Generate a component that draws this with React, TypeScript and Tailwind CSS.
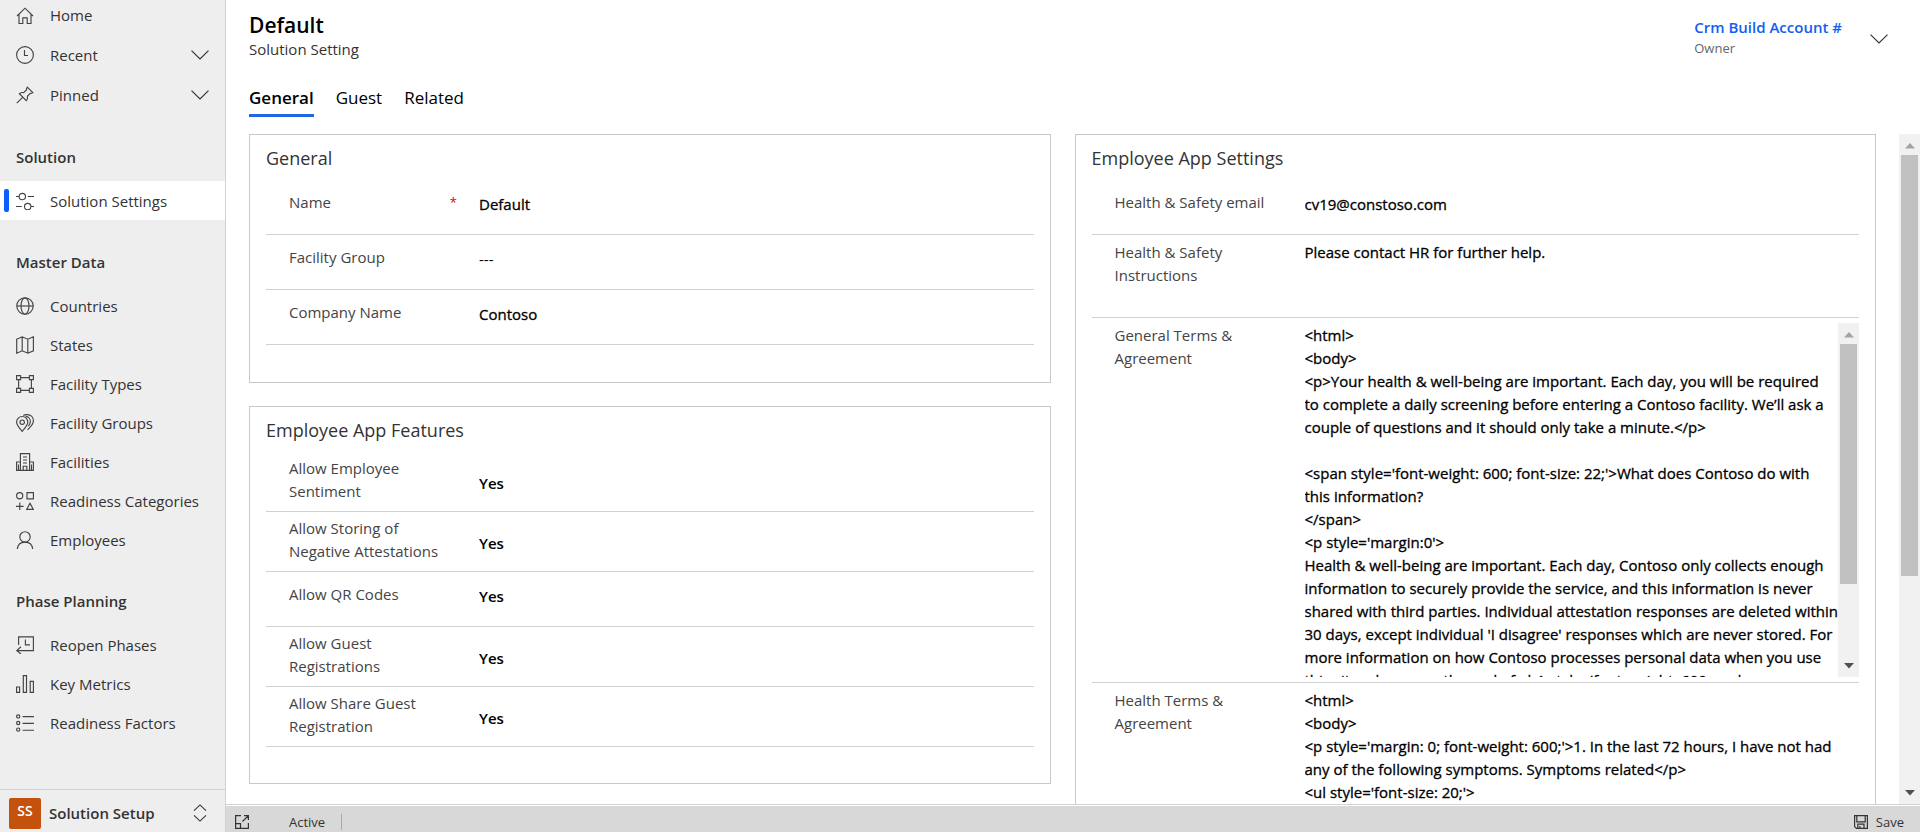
import React from "react";

const SANS = "font-['Open_Sans','Noto_Sans',sans-serif]";
const VALUE_FONT = "text-[15px] leading-[23px] text-black";
const MEDIUM = "[-webkit-text-stroke:0.02em_#000]";

function Icon({ children }: { children: React.ReactNode }) {
  return (
    <svg
      aria-hidden="true"
      className="h-[18px] w-[18px] shrink-0"
      viewBox="0 0 18 18"
      fill="none"
      stroke="#444"
      strokeWidth="1.15"
    >
      {children}
    </svg>
  );
}

const icons: Record<string, React.ReactNode> = {
  home: <path d="M1 9 9 1.2 17 9M3 7.2v9.3h3.8v-5.7h4.4v5.7H15V7.2" />,
  recent: (
    <>
      <circle cx="9" cy="9" r="8.4" />
      <path d="M8.5 4v5.5H12" />
    </>
  ),
  pinned: <path d="m.8 17.2 5.6-5.6M11.3 1.2l5.5 5.5-1.6.8-.9-.1-2.9 2.9c.5 2-.1 3.2-1.1 4.3L3.4 7.7c1.2-1 2.5-1.5 4.3-1.1l2.9-2.9-.1-.9z" />,
  settings: (
    <>
      <circle cx="6.3" cy="4.5" r="3.2" />
      <path d="M0 4.5h3.1M11.8 4.5H18M0 14.5h5.8M15 14.5h3" />
      <circle cx="11.7" cy="14.5" r="3.2" />
    </>
  ),
  countries: (
    <>
      <circle cx="9" cy="9" r="8.2" />
      <ellipse cx="9" cy="9" rx="4" ry="8.2" />
      <path d="M.8 9h16.4" />
    </>
  ),
  states: <path d="M.7 3.2 6.2.8l5.6 2.4L17.4.8v14l-5.6 2.4-5.6-2.4-5.5 2.4zM6.2.8v14M11.8 3.2v14" />,
  types: (
    <path d="M.6.6h4v4h-4zM13.4.6h4v4h-4zM.6 13.4h4v4h-4zM13.4 13.4h4v4h-4zM4.6 2.6h8.8M4.6 15.4h8.8M2.6 4.6v8.8M15.4 4.6v8.8" />
  ),
  groups: (
    <>
      <path d="M6.2 17.3C4 14.6.6 11.7.6 8.1a5.6 5.6 0 0 1 11.2 0c0 3.6-3.4 6.5-5.6 9.2z" />
      <circle cx="6.2" cy="8.2" r="2.2" />
      <path d="M7.3 1.5C8.5.7 10 .5 11.4.6c3.5.2 6 2.8 6 6.1 0 4-3.3 6.3-5.8 9.1M9.7 2.4c2.8.2 4.8 2.5 4.6 5.5-.1 1.7-.9 3-1.9 4.3" />
    </>
  ),
  facilities: (
    <path d="M4.4 17.4V.6h9.2v16.8M4.4 9H.6v8.4h16.8V9h-3.8M7 4h4M7 7h4M7 10h4M7.2 17.4v-4.2h3.6v4.2M2.5 11.5v6M15.5 11.5v6" />
  ),
  categories: (
    <>
      <circle cx="3.7" cy="3.7" r="3.1" />
      <path d="M11 .6h6.4v6.3H11zM3.8 10.6v7.4M0 14.3h7.6M14 11.2l3.3 6.2h-6.6z" />
    </>
  ),
  employees: (
    <>
      <circle cx="9" cy="5.9" r="5.2" />
      <path d="M1.3 18c.5-4.2 3.6-6.9 7.7-6.9s7.2 2.7 7.7 6.9" />
    </>
  ),
  reopen: <path d="M2.6 9V.8h14.8v13.8H1M5 10.8l-4.2 3.8L5 18M9.4 3.6v5.2H14" />,
  metrics: <path d="M.6 12h3v5.4h-3zM7.3.6h3.2v16.8H7.3zM14.2 6.4h3.2v11h-3.2z" />,
  factors: (
    <>
      <circle cx="2.2" cy="2.4" r="1.6" />
      <circle cx="2.2" cy="9" r="1.6" />
      <circle cx="2.2" cy="15.6" r="1.6" />
      <path d="M6.6 2.6H18M6.6 9.3H18M6.6 16.2H18" />
    </>
  ),
};

function Chevron() {
  return (
    <svg aria-hidden="true" className="h-[10px] w-[18px] shrink-0" viewBox="0 0 18 10" fill="none" stroke="#333" strokeWidth="1.15">
      <path d="m.5.6 8.5 8.4L17.5.6" />
    </svg>
  );
}

function NavItem({ icon, label, current = false }: { icon: string; label: string; current?: boolean }) {
  return (
    <li>
      <a
        href="#"
        aria-current={current ? "page" : undefined}
        className={
          current
            ? "flex h-[39px] items-center bg-white pl-1 text-[#333]"
            : "flex h-[39px] items-center pl-4 text-[#333]"
        }
      >
        {current && <span className="mr-[7px] h-[23px] w-[5px] rounded-xs bg-[#0b5fff]" />}
        <Icon>{icons[icon]}</Icon>
        <span className="ml-4 leading-5">{label}</span>
      </a>
    </li>
  );
}

function NavGroup({ title, children }: { title: string; children: React.ReactNode }) {
  return (
    <section>
      <h2 className="flex h-[66px] items-end pb-3 pl-4 font-semibold leading-6 text-[#333]">{title}</h2>
      <ul>{children}</ul>
    </section>
  );
}

function Sidebar() {
  return (
    <aside className="flex w-[226px] shrink-0 flex-col border-r border-[#d2d2d2] bg-[#eee] text-[15px]">
      <nav className="-mt-1 grow">
        <a href="#" className="flex h-[39px] items-center pl-4 text-[#333]">
          <Icon>{icons.home}</Icon>
          <span className="ml-4">Home</span>
        </a>
        {[
          ["recent", "Recent"],
          ["pinned", "Pinned"],
        ].map(([icon, label]) => (
          <button key={icon} type="button" className="flex h-10 w-full items-center pl-4 pr-4 text-[#333]">
            <Icon>{icons[icon]}</Icon>
            <span className="ml-4 grow text-left">{label}</span>
            <Chevron />
          </button>
        ))}
        <NavGroup title="Solution">
          <NavItem icon="settings" label="Solution Settings" current />
        </NavGroup>
        <NavGroup title="Master Data">
          <NavItem icon="countries" label="Countries" />
          <NavItem icon="states" label="States" />
          <NavItem icon="types" label="Facility Types" />
          <NavItem icon="groups" label="Facility Groups" />
          <NavItem icon="facilities" label="Facilities" />
          <NavItem icon="categories" label="Readiness Categories" />
          <NavItem icon="employees" label="Employees" />
        </NavGroup>
        <NavGroup title="Phase Planning">
          <NavItem icon="reopen" label="Reopen Phases" />
          <NavItem icon="metrics" label="Key Metrics" />
          <NavItem icon="factors" label="Readiness Factors" />
        </NavGroup>
      </nav>
      <button type="button" className="flex h-[43px] shrink-0 items-center border-t border-[#d2d2d2] pl-[9px] pr-[18px] pt-1">
        <span className="flex h-[31px] w-8 items-center justify-center rounded-xs bg-[#c4510c] pb-1 text-sm font-semibold text-white">
          SS
        </span>
        <span className="ml-2 grow text-left font-semibold text-[#333]">Solution Setup</span>
        <svg aria-hidden="true" className="h-[18px] w-[14px]" viewBox="0 0 14 18" fill="none" stroke="#333" strokeWidth="1.1">
          <path d="M1 6.6 7 .9l6 5.7M1 11.4l6 5.7 6-5.7" />
        </svg>
      </button>
    </aside>
  );
}

type FieldProps = {
  id: string;
  label: string;
  value: string;
  required?: boolean;
  muted?: boolean;
  strong?: boolean;
};

function Field({ id, label, value, required, muted, strong }: FieldProps) {
  return (
    <div className="flex h-[55px] border-b border-[#d2d2d2] pl-[23px] pt-[11px]">
      <label htmlFor={id} className="flex w-[190px] shrink-0 justify-between pr-[22px] leading-[23px] text-[#444]">
        {label}
        {required && <span className="text-[13px] text-[#e00000]">*</span>}
      </label>
      <input
        id={id}
        readOnly
        defaultValue={value}
        className={`mt-[2px] h-[23px] min-w-0 grow bg-transparent outline-none ${VALUE_FONT} ${
          strong ? "font-semibold" : muted ? "font-normal" : MEDIUM
        }`}
      />
    </div>
  );
}

function TwoLineField({ id, label, value }: FieldProps) {
  return (
    <div className="flex h-[60px] border-b border-[#d2d2d2] pl-[23px] pt-[5px]">
      <label htmlFor={id} className="w-[190px] shrink-0 pr-8 leading-[23px] text-[#444]">
        {label}
      </label>
      <input
        id={id}
        readOnly
        defaultValue={value}
        className={`mt-[15px] h-[23px] min-w-0 grow bg-transparent font-semibold outline-none ${VALUE_FONT}`}
      />
    </div>
  );
}

function ScrollTrack({ ratio }: { ratio: number }) {
  return (
    <div aria-hidden="true" className="flex w-[21px] shrink-0 flex-col items-center bg-[#f1f1f1]">
      <svg className="h-[21px] w-[10px] shrink-0" viewBox="0 0 10 21">
        <path d="M0 14.5 5 9l5 5.5z" fill="#a3a3a3" />
      </svg>
      <div className="flex min-h-0 w-[17px] grow flex-col">
        <div className="bg-[#c1c1c1]" style={{ height: `${ratio}%` }} />
      </div>
      <svg className="h-[21px] w-[10px] shrink-0" viewBox="0 0 10 21">
        <path d="M0 7 5 12.5 10 7z" fill="#505050" />
      </svg>
    </div>
  );
}

function Card({ title, className = "", children }: { title: string; className?: string; children: React.ReactNode }) {
  return (
    <section className={`border border-[#c8c8c8] px-4 ${className}`}>
      <h2 className="pb-[10px] pt-[11px] text-lg leading-6 text-[#333]">{title}</h2>
      {children}
    </section>
  );
}

const GENERAL_TERMS = `<html>
<body>
<p>Your health & well-being are important. Each day, you will be required
to complete a daily screening before entering a Contoso facility. We’ll ask a
couple of questions and it should only take a minute.</p>

<span style='font-weight: 600; font-size: 22;'>What does Contoso do with
this information?
</span>
<p style='margin:0'>
Health & well-being are important. Each day, Contoso only collects enough
information to securely provide the service, and this information is never
shared with third parties. Individual attestation responses are deleted within
30 days, except individual 'I disagree' responses which are never stored. For
more information on how Contoso processes personal data when you use
this site, please see the end of <h1 style='font-weight: 600; and`;

const HEALTH_TERMS = `<html>
<body>
<p style='margin: 0; font-weight: 600;'>1. In the last 72 hours, I have not had
any of the following symptoms. Symptoms related</p>
<ul style='font-size: 20;'>`;

const AREA = `min-w-0 grow resize-none overflow-hidden whitespace-pre bg-transparent outline-none ${MEDIUM} ${VALUE_FONT}`;
const AREA_LABEL = "w-[190px] shrink-0 pr-10 pt-[6px] leading-[23px] text-[#444]";

const tabs = ["General", "Guest", "Related"];

function RecordHeader() {
  return (
    <header className="flex h-[134px] shrink-0 justify-between pl-[23px]">
      <div>
        <h1 className="mt-3 text-[21px] font-semibold leading-[26px] text-black">Default</h1>
        <p className="text-[15px] leading-[22px] text-[#333]">Solution Setting</p>
        <div role="tablist" className="mt-6 flex gap-[22px] text-[17px] leading-7 text-black">
          {tabs.map((tab, i) => (
            <button
              key={tab}
              type="button"
              role="tab"
              aria-selected={i === 0}
              className={i === 0 ? "border-b-3 border-[#2266e3] pb-[2px] font-semibold" : "border-b-3 border-transparent pb-[2px]"}
            >
              {tab}
            </button>
          ))}
        </div>
      </div>
      <div className="flex h-[77px] items-center gap-7 pr-8">
        <div className="pb-1">
          <a href="#" className="block text-[15px] font-semibold leading-[22px] text-[#1160f0]">
            Crm Build Account #
          </a>
          <p className="text-[13px] leading-5 text-[#666]">Owner</p>
        </div>
        <button type="button" aria-label="More header fields">
          <Chevron />
        </button>
      </div>
    </header>
  );
}

export default function App() {
  return (
    <div className={`flex h-screen overflow-hidden bg-white text-[15px] ${SANS}`}>
      <Sidebar />
      <div className="flex min-w-0 grow flex-col">
        <RecordHeader />
        <main className="flex min-h-0 grow">
          <div className="grid min-w-0 grow grid-cols-2 gap-6 overflow-hidden pl-[23px] pr-[23px]">
            <div className="flex flex-col gap-[23px]">
              <Card title="General" className="pb-[37px]">
                <Field id="name" label="Name" value="Default" required />
                <Field id="facility-group" label="Facility Group" value="---" muted />
                <Field id="company" label="Company Name" value="Contoso" />
              </Card>
              <Card title="Employee App Features" className="pb-9">
                <TwoLineField id="sentiment" label="Allow Employee Sentiment" value="Yes" />
                <TwoLineField id="attestations" label="Allow Storing of Negative Attestations" value="Yes" />
                <Field id="qr" label="Allow QR Codes" value="Yes" strong />
                <TwoLineField id="guest" label="Allow Guest Registrations" value="Yes" />
                <TwoLineField id="share-guest" label="Allow Share Guest Registration" value="Yes" />
              </Card>
            </div>
            <Card title="Employee App Settings" className="border-b-0">
              <Field id="email" label="Health & Safety email" value="cv19@constoso.com" />
              <div className="flex h-[83px] border-b border-[#d2d2d2] pl-[23px]">
                <label htmlFor="instructions" className={AREA_LABEL}>
                  Health &amp; Safety Instructions
                </label>
                <textarea id="instructions" readOnly className={`${AREA} pt-[6px]`} defaultValue="Please contact HR for further help." />
              </div>
              <div className="flex h-[365px] border-b border-[#d2d2d2] pl-[23px]">
                <label htmlFor="general-terms" className={AREA_LABEL}>
                  General Terms &amp; Agreement
                </label>
                <div className="flex min-w-0 grow pb-[5px] pt-[5px]">
                  <textarea id="general-terms" readOnly className={`${AREA} pt-px`} defaultValue={GENERAL_TERMS} />
                  <ScrollTrack ratio={77} />
                </div>
              </div>
              <div className="flex h-[300px] pl-[23px]">
                <label htmlFor="health-terms" className={AREA_LABEL}>
                  Health Terms &amp; Agreement
                </label>
                <textarea id="health-terms" readOnly className={`${AREA} pt-[6px]`} defaultValue={HEALTH_TERMS} />
              </div>
            </Card>
          </div>
          <ScrollTrack ratio={67} />
        </main>
        <footer className="shrink-0 border-t border-[#d2d2d2] pt-px">
          <div className="flex h-[26px] items-center bg-[#d8d8d8] pl-[9px] pr-4 pt-[6px] text-[13px] leading-5 text-[#333]">
            <button type="button" aria-label="Open in new window">
              <svg aria-hidden="true" className="h-[14px] w-[14px]" viewBox="0 0 14 14" fill="none" stroke="#333" strokeWidth="1.2">
                <path d="M6 .6H.6v12.8h12.8V8M.6 8.6h4.9v4.8M9 .6h4.4V5M13.4.6 7.5 6.5" />
              </svg>
            </button>
            <span className="ml-10">Active</span>
            <span className="ml-4 h-4 w-px bg-[#aaa]" />
            <button type="button" className="ml-auto flex items-center gap-2">
              <svg aria-hidden="true" className="h-[14px] w-[14px]" viewBox="0 0 14 14" fill="none" stroke="#333" strokeWidth="1.2">
                <path d="M.6.6h12.8v12.8H2.4L.6 11.6zM2.8.6v6.2h8.4V.6M3.8 13.4V9.2h6.2v4.2M5.9 11v2.4" />
              </svg>
              Save
            </button>
          </div>
        </footer>
      </div>
    </div>
  );
}
